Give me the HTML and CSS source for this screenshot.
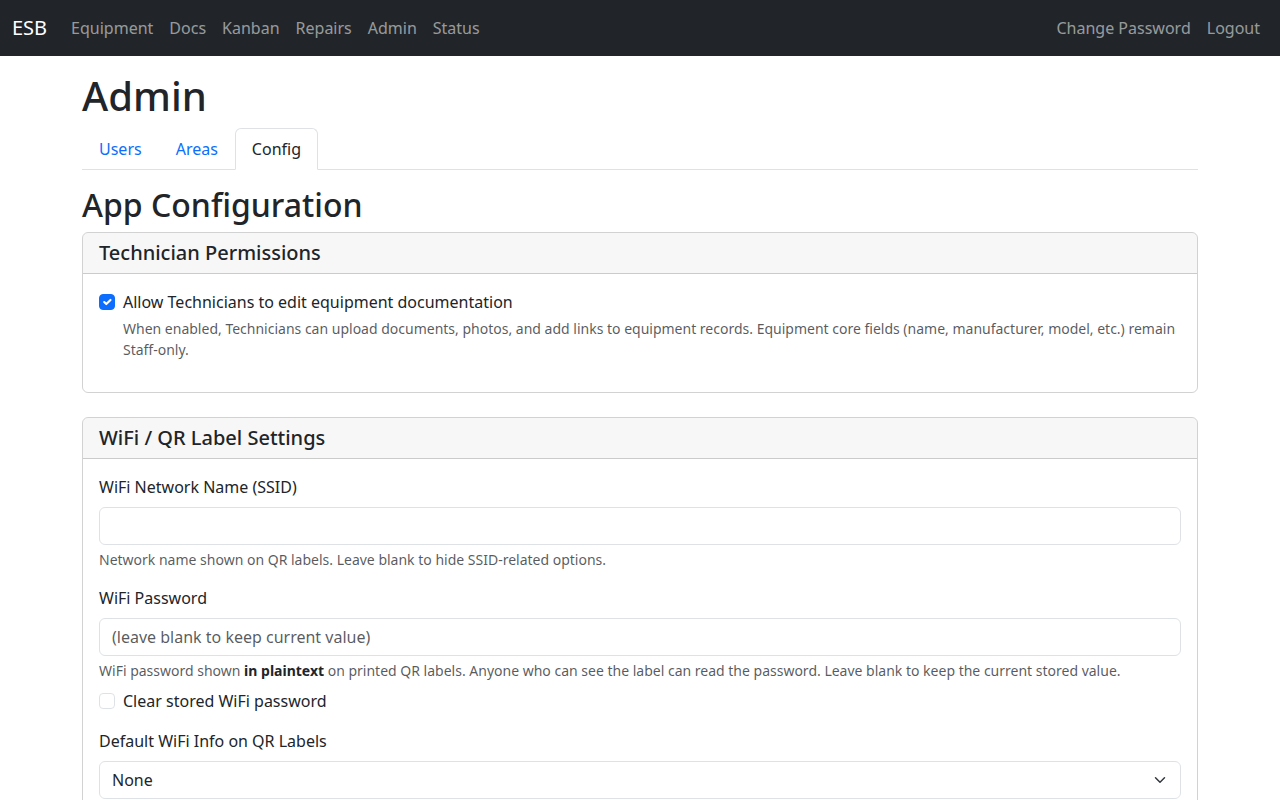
FILE: index.html
```html
<!DOCTYPE html>
<html lang="en">
<head>
<meta charset="utf-8">
<title>Admin - ESB</title>
<link rel="stylesheet" href="styles.css">
</head>
<body>
<nav class="navbar">
  <div class="nav-left">
    <a class="brand" href="#">ESB</a>
    <a class="nav-link" href="#">Equipment</a>
    <a class="nav-link" href="#">Docs</a>
    <a class="nav-link" href="#">Kanban</a>
    <a class="nav-link" href="#">Repairs</a>
    <a class="nav-link" href="#">Admin</a>
    <a class="nav-link" href="#">Status</a>
  </div>
  <div class="nav-right">
    <a class="nav-link" href="#">Change Password</a>
    <a class="nav-link" href="#">Logout</a>
  </div>
</nav>
<main class="container">
  <h1 class="page-title">Admin</h1>
  <ul class="tabs">
    <li><a class="tab" href="#">Users</a></li>
    <li><a class="tab" href="#">Areas</a></li>
    <li><a class="tab active" href="#">Config</a></li>
  </ul>
  <h2 class="section-title">App Configuration</h2>

  <div class="card">
    <div class="card-header">Technician Permissions</div>
    <div class="card-body">
      <div class="form-check block">
        <span class="check checked"><svg viewBox="0 0 20 20" width="16" height="16"><path fill="none" stroke="#fff" stroke-linecap="round" stroke-linejoin="round" stroke-width="3" d="m6 10 3 3 6-6"/></svg></span>
        <label class="check-label">Allow Technicians to edit equipment documentation</label>
        <div class="form-text">When enabled, Technicians can upload documents, photos, and add links to equipment records. Equipment core fields (name, manufacturer, model, etc.) remain Staff-only.</div>
      </div>
    </div>
  </div>

  <div class="card">
    <div class="card-header">WiFi / QR Label Settings</div>
    <div class="card-body">
      <div class="block">
        <label class="form-label">WiFi Network Name (SSID)</label>
        <input class="form-control" type="text">
        <div class="form-text">Network name shown on QR labels. Leave blank to hide SSID-related options.</div>
      </div>
      <div class="block">
        <label class="form-label">WiFi Password</label>
        <input class="form-control" type="password" placeholder="(leave blank to keep current value)">
        <div class="form-text">WiFi password shown <strong>in plaintext</strong> on printed QR labels. Anyone who can see the label can read the password. Leave blank to keep the current stored value.</div>
        <div class="form-check clear-check">
          <span class="check"></span>
          <label class="check-label">Clear stored WiFi password</label>
        </div>
      </div>
      <div class="block">
        <label class="form-label">Default WiFi Info on QR Labels</label>
        <div class="form-select">
          <span>None</span>
          <svg viewBox="0 0 16 16" width="16" height="12"><path fill="none" stroke="#343a40" stroke-linecap="round" stroke-linejoin="round" stroke-width="2" d="m2 5 6 6 6-6"/></svg>
        </div>
      </div>
    </div>
  </div>
</main>
</body>
</html>
```

FILE: styles.css
```css
* { box-sizing: border-box; }
html, body { margin: 0; padding: 0; }
body {
  font-family: "Noto Sans", "DejaVu Sans", sans-serif;
  font-size: 16px;
  line-height: 1.5;
  color: #212529;
  background: #fff;
}
a { text-decoration: none; }

.navbar {
  height: 56px;
  background: #212529;
  display: flex;
  align-items: center;
  justify-content: space-between;
  padding: 0 12px;
}
.nav-left, .nav-right { display: flex; align-items: center; }
.brand {
  color: #fff;
  font-size: 20px;
  line-height: 30px;
  margin-right: 16px;
}
.nav-link {
  color: rgba(255,255,255,0.55);
  padding: 8px;
  line-height: 24px;
}

.container {
  max-width: 1140px;
  margin: 16px auto 0;
  padding: 0 12px;
}
.page-title {
  font-size: 40px;
  font-weight: 500;
  line-height: 1.2;
  margin: 0 0 8px;
}
.tabs {
  list-style: none;
  margin: 0 0 16px;
  padding: 0;
  display: flex;
  border-bottom: 1px solid #dee2e6;
}
.tabs li { margin-bottom: -1px; }
.tab {
  display: block;
  padding: 8px 16px;
  line-height: 24px;
  color: #0d6efd;
  border: 1px solid transparent;
  border-radius: 6px 6px 0 0;
}
.tab.active {
  color: #495057;
  color: #212529;
  background: #fff;
  border-color: #dee2e6 #dee2e6 #fff;
}
.section-title {
  font-size: 32px;
  font-weight: 500;
  line-height: 1.2;
  margin: 0 0 8px;
}

.card {
  border: 1px solid rgba(0,0,0,0.175);
  border-radius: 6px;
  margin-bottom: 24px;
  overflow: hidden;
}
.card-header {
  background: rgba(0,0,0,0.03);
  border-bottom: 1px solid rgba(0,0,0,0.175);
  padding: 8px 16px;
  font-size: 20px;
  font-weight: 500;
  line-height: 1.2;
}
.card-body { padding: 16px; }

.block { margin-bottom: 16px; }
.form-label { display: block; margin-bottom: 8px; }
.form-control {
  display: block;
  width: 100%;
  height: 38px;
  padding: 6px 12px;
  font: inherit;
  line-height: 1.5;
  color: #212529;
  border: 1px solid #dee2e6;
  border-radius: 6px;
  background: #fff;
}
.form-control::placeholder { color: rgba(33,37,41,0.75); opacity: 1; }
.form-text {
  margin-top: 4px;
  font-size: 14px;
  line-height: 21px;
  color: rgba(33,37,41,0.75);
}
.form-text strong { font-weight: 700; color: #212529; }

.form-check {
  position: relative;
  padding-left: 24px;
}
.check {
  position: absolute;
  left: 0;
  top: 4px;
  width: 16px;
  height: 16px;
  border: 1px solid #dee2e6;
  border-radius: 4px;
  background: #fff;
  display: flex;
  align-items: center;
  justify-content: center;
}
.check.checked {
  background: #0d6efd;
  border-color: #0d6efd;
}
.check svg { display: block; }
.clear-check { margin-top: 8px; }

.form-select {
  height: 38px;
  display: flex;
  align-items: center;
  justify-content: space-between;
  padding: 6px 12px;
  border: 1px solid #dee2e6;
  border-radius: 6px;
}
.form-select svg { display: block; }
```
